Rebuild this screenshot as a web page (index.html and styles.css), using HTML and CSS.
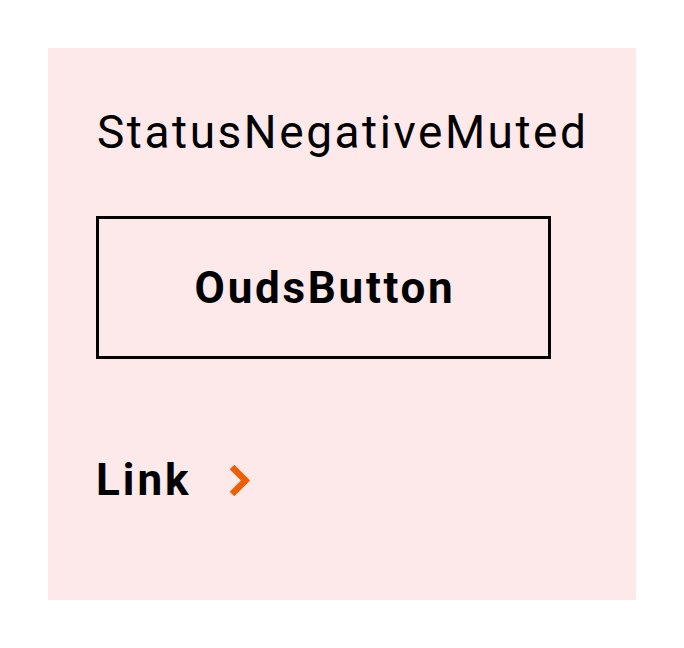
FILE: index.html
```html
<!DOCTYPE html>
<html>
<head>
<meta charset="utf-8">
<link rel="stylesheet" href="styles.css">
</head>
<body>
<div class="panel">
  <div class="title">StatusNegativeMuted</div>
  <div class="button">OudsButton</div>
  <div class="link">
    <span class="link-text">Link</span>
    <svg class="chevron" width="23" height="33" viewBox="0 0 23 33">
      <path d="M4 3 L17.5 16.5 L4 30" fill="none" stroke="#f15e00" stroke-width="6.5"/>
    </svg>
  </div>
</div>
</body>
</html>
```
FILE: styles.css
```css
html, body {
  margin: 0;
  padding: 0;
  background: #ffffff;
}
body {
  padding: 48px;
  font-family: Roboto, "Noto Sans", sans-serif;
  color: #000;
}
.panel {
  width: 588px;
  height: 552px;
  box-sizing: border-box;
  background: #fde9e9;
  padding: 0 48px;
  display: flex;
  flex-direction: column;
  align-items: flex-start;
}
.title {
  font-size: 46px;
  line-height: 54px;
  margin-top: 57px;
  margin-left: 1px;
  letter-spacing: 2.55px;
}
.button {
  margin-top: 57px;
  width: 455px;
  height: 143px;
  box-sizing: border-box;
  border: 3px solid #000;
  display: flex;
  align-items: center;
  justify-content: center;
  font-size: 44px;
  font-weight: 700;
  letter-spacing: 2.7px;
  padding-left: 3px;
}
.link {
  margin-top: 96px;
  display: flex;
  align-items: center;
  gap: 36px;
}
.link-text {
  font-size: 44px;
  font-weight: 700;
  line-height: 50px;
  letter-spacing: 3px;
}
.chevron {
  display: block;
}
```
